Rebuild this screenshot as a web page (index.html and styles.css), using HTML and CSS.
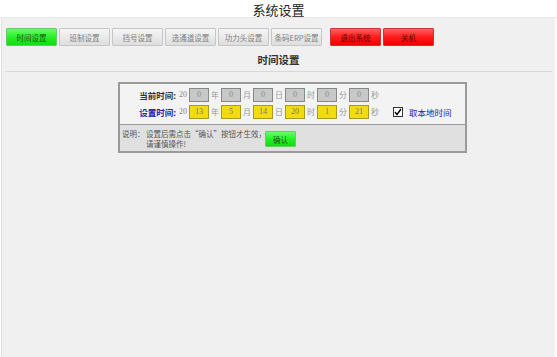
FILE: index.html
```html
<!DOCTYPE html>
<html lang="zh-CN">
<head>
    <meta charset="UTF-8">
    <meta name="viewport" content="width=device-width, initial-scale=1.0">
    <title>系统设置</title>
    <link rel="stylesheet" href="styles.css">
</head>
<body>
    <h1 class="page-title">系统设置</h1>

    <div class="panel">
        <div class="toolbar">
            <button class="btn btn-green">时间设置</button>
            <button class="btn">班制设置</button>
            <button class="btn">挡号设置</button>
            <button class="btn">选通道设置</button>
            <button class="btn">功力头设置</button>
            <button class="btn">条码ERP设置</button>
            <button class="btn btn-red btn-first-red">退出系统</button>
            <button class="btn btn-red">关机</button>
        </div>

        <h2 class="section-title">时间设置</h2>
        <hr class="divider">

        <div class="time-box">
            <div class="time-rows">
                <div class="time-row">
                    <span class="row-label">当前时间:</span>
                    <span class="century">20</span>
                    <span class="field field-gray">0</span><span class="unit">年</span>
                    <span class="field field-gray">0</span><span class="unit">月</span>
                    <span class="field field-gray">0</span><span class="unit">日</span>
                    <span class="field field-gray">0</span><span class="unit">时</span>
                    <span class="field field-gray">0</span><span class="unit">分</span>
                    <span class="field field-gray">0</span><span class="unit">秒</span>
                </div>
                <div class="time-row">
                    <span class="row-label blue">设置时间:</span>
                    <span class="century">20</span>
                    <span class="field field-yellow">13</span><span class="unit">年</span>
                    <span class="field field-yellow">5</span><span class="unit">月</span>
                    <span class="field field-yellow">14</span><span class="unit">日</span>
                    <span class="field field-yellow">20</span><span class="unit">时</span>
                    <span class="field field-yellow">1</span><span class="unit">分</span>
                    <span class="field field-yellow">21</span><span class="unit">秒</span>
                    <span class="check">
                        <svg width="8" height="8" viewBox="0 0 8 8"><path d="M1 4 L3 6.5 L7 1" fill="none" stroke="#000" stroke-width="1.4"/></svg>
                    </span>
                    <span class="local-time">取本地时间</span>
                </div>
            </div>
            <div class="note">
                <span class="note-label">说明：</span>
                <span class="note-text">设置后需点击“确认”按钮才生效，<br>请谨慎操作!</span>
                <button class="btn btn-green btn-confirm">确认</button>
            </div>
        </div>
    </div>
</body>
</html>
```

FILE: styles.css
```css
body {
    margin: 0;
    background-color: #fff;
    font-family: "Noto Sans CJK SC", "DejaVu Sans", sans-serif;
    color: #333;
}
.page-title {
    margin: 0;
    height: 17px;
    font-size: 13px;
    line-height: 19px;
    font-weight: normal;
    text-align: center;
    color: #222;
    border-bottom: 1px solid #e8e8e8;
}
.panel {
    height: 339px;
    margin: 0 2px 0 1px;
    padding: 10px 3px 0 3px;
    background-color: #f0f0f0;
    border-left: 1px solid #e0e0e0;
}
.toolbar {
    display: flex;
    gap: 2px;
    padding-left: 1px;
}
.btn {
    flex-shrink: 0;
    width: 51px;
    height: 18px;
    padding: 0;
    font-family: inherit;
    font-size: 7.5px;
    color: #808080;
    background: linear-gradient(#f6f6f6, #dedede);
    border: 1px solid #c6c6c6;
    border-radius: 1px;
}
.btn-green {
    color: #225522;
    background: linear-gradient(#66ff66, #22ee22 55%, #11dd11);
    border-color: #66cc66;
}
.btn-red {
    color: #660000;
    background: linear-gradient(#ff6060, #ff1c1c 50%, #ee0000);
    border-color: #cc3333;
}
.btn-first-red {
    margin-left: 6px;
}
.section-title {
    margin: 7px 0 4px;
    font-size: 10.5px;
    line-height: 14px;
    text-align: center;
    color: #333;
}
.divider {
    margin: 0;
    border: 0;
    border-top: 1px solid #d8d8d8;
}
.time-box {
    width: 345px;
    margin: 10px 0 0 113px;
    border: 2px solid #9a9a9a;
    background-color: #f3f3f3;
}
.time-rows {
    padding: 2px 0 4px;
    border-bottom: 1px solid #9a9a9a;
}
.time-row {
    display: flex;
    align-items: center;
    height: 17px;
    font-size: 8px;
    color: #999;
    white-space: nowrap;
}
.time-row > span {
    flex-shrink: 0;
}
.row-label {
    width: 56px;
    text-align: right;
    font-size: 8.5px;
    font-weight: bold;
    color: #333;
}
.blue {
    color: #2424a8;
}
.century {
    margin: 0 2px 0 3px;
    font-family: "Liberation Serif", serif;
    font-size: 8px;
    color: #888;
}
.field {
    box-sizing: border-box;
    width: 20px;
    height: 14px;
    line-height: 12px;
    text-align: center;
    font-family: "Liberation Serif", serif;
    font-size: 8px;
    border: 1px solid #888;
}
.field-gray {
    color: #888;
    background-color: #c8c8c8;
}
.field-yellow {
    color: #777;
    background-color: #f2dc10;
    border-color: #a89a20;
}
.unit {
    width: 8px;
    margin: 0 2px;
    color: #999;
}
.check {
    display: flex;
    align-items: center;
    justify-content: center;
    box-sizing: border-box;
    width: 10px;
    height: 10px;
    margin-left: 12px;
    border: 1px solid #333;
    background-color: #fff;
}
.local-time {
    margin-left: 6px;
    font-size: 8.5px;
    color: #2424a8;
}
.note {
    display: flex;
    align-items: flex-start;
    height: 22px;
    padding: 4px 0 0 2px;
    background-color: #e0e0e0;
    font-size: 7.5px;
    line-height: 10px;
    color: #555;
}
.note-label {
    width: 24px;
}
.note-text {
    width: 119px;
    white-space: nowrap;
}
.btn-confirm {
    width: 31px;
    height: 16px;
    margin-top: 2px;
    color: #225522;
}
```
